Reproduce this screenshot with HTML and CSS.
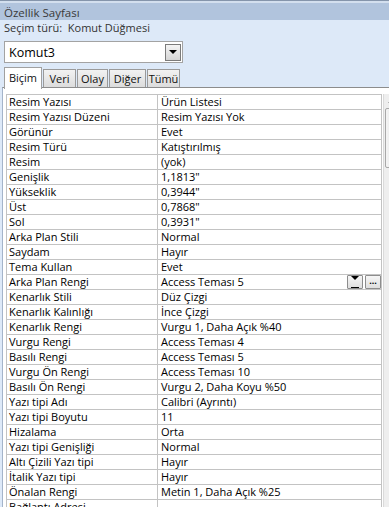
FILE: index.html
```html
<!DOCTYPE html>
<html lang="tr">
  <head>
    <meta charset="UTF-8" />
    <meta name="viewport" content="width=device-width, initial-scale=1.0" />
    <title>Özellik Sayfası</title>
    <link rel="stylesheet" href="styles.css">
  </head>
  <body>
    <div class="sheet">
      <div class="title">Özellik Sayfası</div>
      <div class="selection">Seçim türü:&nbsp; Komut Düğmesi</div>

      <div class="combo">
        <span class="combo-text">Komut3</span>
        <span class="combo-btn"><span class="arrow"></span></span>
      </div>

      <div class="tabs">
        <span class="tab active">Biçim</span>
        <span class="tab w33">Veri</span>
        <span class="tab w31">Olay</span>
        <span class="tab w37">Diğer</span>
        <span class="tab w33">Tümü</span>
      </div>

      <div class="panel">
        <table class="props">
          <tr><td>Resim Yazısı</td><td>Ürün Listesi</td></tr>
          <tr><td>Resim Yazısı Düzeni</td><td>Resim Yazısı Yok</td></tr>
          <tr><td>Görünür</td><td>Evet</td></tr>
          <tr><td>Resim Türü</td><td>Katıştırılmış</td></tr>
          <tr><td>Resim</td><td>(yok)</td></tr>
          <tr><td>Genişlik</td><td>1,1813"</td></tr>
          <tr><td>Yükseklik</td><td>0,3944"</td></tr>
          <tr><td>Üst</td><td>0,7868"</td></tr>
          <tr><td>Sol</td><td>0,3931"</td></tr>
          <tr><td>Arka Plan Stili</td><td>Normal</td></tr>
          <tr><td>Saydam</td><td>Hayır</td></tr>
          <tr><td>Tema Kullan</td><td>Evet</td></tr>
          <tr>
            <td>Arka Plan Rengi</td>
            <td>
              <div class="cell-tools">
                <span>Access Teması 5</span>
                <span class="mini-btn"><span class="arrow"></span><span class="bar"></span></span>
                <span class="mini-btn dots">...</span>
              </div>
            </td>
          </tr>
          <tr><td>Kenarlık Stili</td><td>Düz Çizgi</td></tr>
          <tr><td>Kenarlık Kalınlığı</td><td>İnce Çizgi</td></tr>
          <tr><td>Kenarlık Rengi</td><td>Vurgu 1, Daha Açık %40</td></tr>
          <tr><td>Vurgu Rengi</td><td>Access Teması 4</td></tr>
          <tr><td>Basılı Rengi</td><td>Access Teması 5</td></tr>
          <tr><td>Vurgu Ön Rengi</td><td>Access Teması 10</td></tr>
          <tr><td>Basılı Ön Rengi</td><td>Vurgu 2, Daha Koyu %50</td></tr>
          <tr><td>Yazı tipi Adı</td><td>Calibri (Ayrıntı)</td></tr>
          <tr><td>Yazı tipi Boyutu</td><td>11</td></tr>
          <tr><td>Hizalama</td><td>Orta</td></tr>
          <tr><td>Yazı tipi Genişliği</td><td>Normal</td></tr>
          <tr><td>Altı Çizili Yazı tipi</td><td>Hayır</td></tr>
          <tr><td>İtalik Yazı tipi</td><td>Hayır</td></tr>
          <tr><td>Önalan Rengi</td><td>Metin 1, Daha Açık %25</td></tr>
          <tr><td>Bağlantı Adresi</td><td></td></tr>
        </table>

        <div class="scrollbar">
          <div class="sb-up"><span class="sb-arrow"></span></div>
          <div class="sb-thumb"></div>
        </div>
      </div>
    </div>
  </body>
</html>
```

FILE: styles.css
```css
* {
  box-sizing: border-box;
}

body {
  margin: 0;
  background: #dde9f8;
  font-family: "Open Sans", "Noto Sans", sans-serif;
  font-size: 11px;
  color: #000;
}

.sheet {
  width: 389px;
  height: 507px;
  overflow: hidden;
  background: #dde9f8;
  border-top: 1px solid #8595ab;
}

.title {
  height: 19px;
  padding-left: 4px;
  line-height: 19px;
  font-size: 11.5px;
  color: #3a3a3a;
  background: #b1c4dd;
  border-top: 2px solid #d3dfee;
}

.selection {
  height: 16px;
  line-height: 16px;
  padding-left: 4px;
  color: #333;
}

.combo {
  display: flex;
  align-items: center;
  margin: 5px 0 0 4px;
  width: 179px;
  height: 22px;
  background: #fff;
  border: 1px solid #a3a3a3;
  padding: 0 1px 0 4px;
}

.combo-text {
  flex: 1;
  font-size: 12.5px;
}

.combo-btn {
  display: flex;
  align-items: center;
  justify-content: center;
  width: 16px;
  height: 17px;
  border: 1px solid #7b7b7b;
  background: linear-gradient(#f4f4f4, #d6d6d6);
}

.arrow {
  width: 0;
  height: 0;
  border-left: 4px solid transparent;
  border-right: 4px solid transparent;
  border-top: 4px solid #000;
}

.tabs {
  display: flex;
  align-items: flex-end;
  gap: 1px;
  height: 20px;
  margin: 4px 0 0 4px;
  position: relative;
  z-index: 1;
}

.tab {
  height: 18px;
  line-height: 18px;
  text-align: center;
  color: #111;
  background: linear-gradient(#f2f2f2, #dcdcdc);
  border: 1px solid #9a9a9a;
  border-bottom: none;
}

.tab.w31 { width: 31px; }
.tab.w33 { width: 33px; }
.tab.w37 { width: 37px; }

.tab.active {
  width: 38px;
  height: 22px;
  margin-bottom: -2px;
  line-height: 20px;
  background: #fff;
  border-color: #a0a0a0;
}

.panel {
  display: flex;
  align-items: flex-start;
  height: 420px;
  margin-left: 2px;
  padding: 6px 0 0 3px;
  background: #fff;
  border-top: 1px solid #8c8c8c;
  border-left: 1px solid #a4b4ca;
}

.props {
  border-collapse: collapse;
  width: 376px;
  flex: none;
}

.props td {
  height: 15px;
  padding: 0 0 0 2px;
  line-height: 14px;
  white-space: nowrap;
  border: 1px solid #c3c3c3;
}

.props td:first-child {
  width: 151px;
}

.props td + td {
  padding-left: 3px;
}

.cell-tools {
  display: flex;
  align-items: center;
  gap: 2px;
}

.cell-tools span:first-child {
  flex: 1;
}

.mini-btn {
  display: flex;
  flex-direction: column;
  align-items: center;
  justify-content: center;
  gap: 1px;
  width: 16px;
  height: 14px;
  border: 1px solid #8d8d8d;
  border-radius: 1px;
  background: linear-gradient(#f6f6f6, #dedede);
}

.mini-btn .bar {
  width: 8px;
  height: 1px;
  background: #000;
}

.mini-btn.dots {
  font-size: 9px;
  font-weight: bold;
  line-height: 6px;
  padding-bottom: 3px;
}

.scrollbar {
  flex: none;
  width: 17px;
  height: 414px;
  margin-left: 1px;
  background: #eeeeee;
  border-left: 1px solid #dadada;
}

.sb-up {
  display: flex;
  justify-content: center;
  align-items: center;
  height: 14px;
}

.sb-arrow {
  width: 0;
  height: 0;
  border-left: 4px solid transparent;
  border-right: 4px solid transparent;
  border-bottom: 3px solid #555;
}

.sb-thumb {
  height: 60px;
  margin: 0 1px;
  border: 1px solid #a8a8a8;
  border-radius: 2px;
  background: linear-gradient(90deg, #f4f4f4, #e0e0e0);
}
```
